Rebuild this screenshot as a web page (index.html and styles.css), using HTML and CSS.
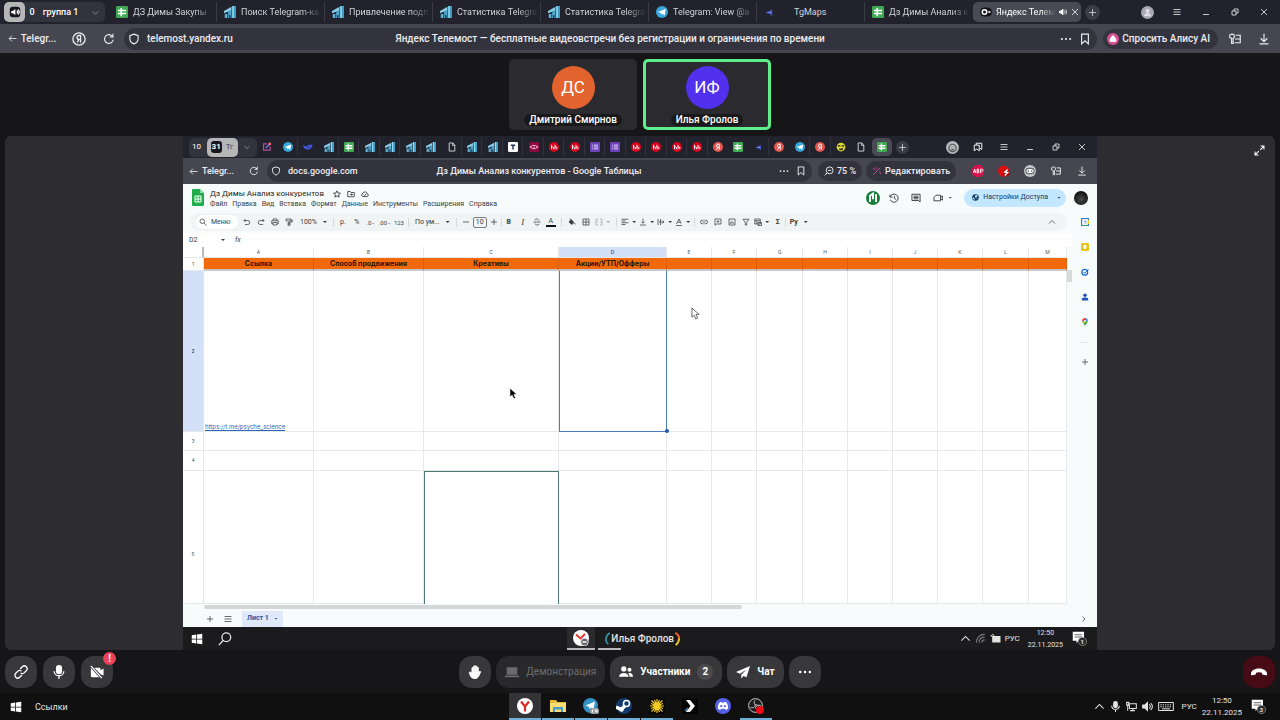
FILE: index.html
```html
<!DOCTYPE html>
<html lang="ru">
<head>
  <meta charset="UTF-8">
  <meta name="viewport" content="width=device-width, initial-scale=1.0">
  <title>Яндекс Телемост</title>
  <link rel="stylesheet" href="styles.css">
</head>
<body>

<!-- Icon set -->
<svg class="sprite" aria-hidden="true">
  <symbol id="back" viewBox="0 0 16 16"><path d="M15 8H2M7 3L2 8l5 5"/></symbol>
  <symbol id="reload" viewBox="0 0 16 16"><path d="M13.500 9A5.800 5.800 0 1 1 11 3.200L13 5M13.200 1v4.300H9"/></symbol>
  <symbol id="shield" viewBox="0 0 16 16"><path d="M8 1.500l5.500 2v4c0 3.500-2.500 5.800-5.500 7-3-1.200-5.500-3.500-5.500-7v-4z"/></symbol>
  <symbol id="ya-round" viewBox="0 0 16 16"><circle cx="8" cy="8" r="7"/><path d="M9.800 12V4H8a2.200 2.200 0 0 0 0 4.500h1.800M8 8.500L6 12"/></symbol>
  <symbol id="dots" viewBox="0 0 16 16"><g fill="currentColor" stroke="none"><circle cx="2.500" cy="8" r="1.400"/><circle cx="8" cy="8" r="1.400"/><circle cx="13.500" cy="8" r="1.400"/></g></symbol>
  <symbol id="bookmark" viewBox="0 0 16 16"><path d="M3.500 1.500h9v13L8 10.500l-4.500 4z"/></symbol>
  <symbol id="download" viewBox="0 0 16 16"><path d="M8 1v10M3.500 7L8 11.500 12.500 7M2 14.500h12"/></symbol>
  <symbol id="ext" viewBox="0 0 16 16"><path d="M1 3c0-2 6-2 6 0v3L5.500 7v7h-2V7L1 6zM9 3h6v10H7.500M8 8h7"/></symbol>
  <symbol id="down" viewBox="0 0 16 16"><path d="M3 6l5 5 5-5"/></symbol>
  <symbol id="up" viewBox="0 0 16 16"><path d="M2 11l6-6 6 6"/></symbol>
  <symbol id="right" viewBox="0 0 16 16"><path d="M5 3l5 5-5 5"/></symbol>
  <symbol id="plus" viewBox="0 0 16 16"><path d="M8 2v12M2 8h12"/></symbol>
  <symbol id="minus" viewBox="0 0 16 16"><path d="M2 8h12"/></symbol>
  <symbol id="lines" viewBox="0 0 16 16"><path d="M1 3h14M1 8h14M1 13h14"/></symbol>
  <symbol id="min" viewBox="0 0 16 16"><path d="M2 13h12"/></symbol>
  <symbol id="restore" viewBox="0 0 16 16"><path d="M2 6h8v8H2zM6 6V2h8v8h-4"/></symbol>
  <symbol id="close" viewBox="0 0 16 16"><path d="M2 2l12 12M14 2L2 14"/></symbol>
  <symbol id="sound" viewBox="0 0 16 16"><path fill="currentColor" d="M1 6h3l4-4v12l-4-4H1z"/><path d="M10.500 5c2 1.500 2 4.500 0 6M12.500 3c3.500 3 3.500 7 0 10"/></symbol>
  <symbol id="sound-box" viewBox="0 0 16 16"><rect x="1" y="1" width="14" height="14" rx="4" fill="#17171d" stroke="none"/><path fill="#fff" stroke="none" d="M3 6.500h2L8.500 4v8L5 9.500H3z"/><path stroke="#fff" d="M10.500 6c1 1 1 3 0 4M12 4.500c2 2 2 5 0 7"/></symbol>
  <symbol id="sheet" viewBox="0 0 16 16"><rect width="16" height="16" rx="1.500" fill="#3fa850" stroke="none"/><path stroke="#fff" stroke-width="2.200" d="M2.500 6h11M7 2.500v11M2.500 10h11"/></symbol>
  <symbol id="stat" viewBox="0 0 16 16"><g stroke="none"><path fill="#8ccbe6" d="M0 6.500L10 1v5L0 9.500z"/><path fill="#5fb0d6" d="M1 10.500h3.500V16H1z"/><path fill="#4ba7d0" d="M5.500 7.500L10 6v10H8.500v-4H7v4H5.500z"/><path fill="#3f9cc8" d="M11 0h5v16h-5z"/><path fill="#8fdcf0" d="M11 0h2v16h-2z"/></g></symbol>
  <symbol id="tg" viewBox="0 0 16 16"><circle cx="8" cy="8" r="8" fill="#35a6d8" stroke="none"/><path fill="#fff" stroke="none" d="M2.500 8L13 3.800 11.500 12.500 8.200 10.200 6.600 11.800 6.300 9.300z"/></symbol>
  <symbol id="maps" viewBox="0 0 16 16"><path fill="#4256c0" stroke="none" d="M2 9l9-4.500v9L7.500 10.500z"/><path fill="#8a9bf0" stroke="none" d="M2 9l7-1.500 1 1.500z"/></symbol>
  <symbol id="telemost" viewBox="0 0 16 16"><rect y="2" width="16" height="12" rx="6" fill="#15151b" stroke="none"/><circle cx="6" cy="8" r="3" stroke="#fff" stroke-width="2"/><path stroke="#fff" stroke-width="2" d="M11 8h3"/></symbol>
  <symbol id="user" viewBox="0 0 16 16"><g stroke="none"><circle cx="8" cy="8" r="8" fill="#a9a7b1"/><circle cx="8" cy="6" r="2.500" fill="#dddbe3"/><path fill="#dddbe3" d="M3.500 12.500c1-5 8-5 9 0z"/></g></symbol>
  <symbol id="alice" viewBox="0 0 16 16"><circle cx="8" cy="8" r="8" fill="#d94f96" stroke="none"/><path fill="#fff" stroke="none" d="M8 3c1.500 0 5 6 4.500 7.500S9.500 12 8 12s-4 0-4.500-1.500S6.500 3 8 3z"/></symbol>
  <symbol id="note" viewBox="0 0 16 16"><path stroke="#a9529c" stroke-width="2" d="M13 7v6H2.500V3H8"/><path stroke="#7e7ee8" stroke-width="2" d="M6 9.500l7-7"/><circle cx="12.500" cy="3" r="2.200" fill="#ff6b6b" stroke="none"/></symbol>
  <symbol id="whale" viewBox="0 0 16 16"><path fill="#4258e0" stroke="none" d="M0 5c3 0 4 2 6 2s2-3 3-3 2 2 6-1c0 5-3 9-7 9S1 10 0 5z"/><circle cx="9" cy="8" r="1" fill="#15151f" stroke="none"/></symbol>
  <symbol id="doc" viewBox="0 0 16 16"><path d="M3.500 1.500H9.500l3 3.500v9.500h-9zM9 2v3.500h3.500"/></symbol>
  <symbol id="t-bank" viewBox="0 0 16 16"><rect width="16" height="16" rx="2" fill="#fff" stroke="none"/><path stroke="#28305c" stroke-width="2.400" d="M4.500 5h7M8 5v7"/></symbol>
  <symbol id="eye" viewBox="0 0 16 16"><rect width="16" height="16" rx="2" fill="#8c0b45" stroke="none"/><path stroke="#ffbccb" d="M1.500 8L6 5.500h4L14.500 8 10 10.500H6z"/><circle cx="8" cy="8" r="1" fill="#fff" stroke="none"/></symbol>
  <symbol id="hh" viewBox="0 0 16 16"><circle cx="8" cy="8" r="8" fill="#d6001c" stroke="none"/><path stroke="#fff" stroke-width="1.500" d="M4 4.500v7M4 8.500c1.500-1.500 3-1 3 .5v2.500M9.500 4.500v7M9.500 8.500c1.500-1.500 3-1 3 .5v2.500"/></symbol>
  <symbol id="form" viewBox="0 0 16 16"><rect width="16" height="16" rx="2" fill="#6b42b8" stroke="none"/><path stroke="#e6dcff" d="M6 5h7M6 8h7M6 11h7M3 5h1.500M3 8h1.500M3 11h1.500"/></symbol>
  <symbol id="ya-red" viewBox="0 0 16 16"><circle cx="8" cy="8" r="8" fill="#e5544d" stroke="none"/><path stroke="#fff" d="M10 12.500v-9H8a2.400 2.400 0 0 0 0 5h2M8 8.500l-2.500 4"/></symbol>
  <symbol id="smile" viewBox="0 0 16 16"><circle cx="8" cy="8" r="7" fill="#e0d62f" stroke="none"/><path stroke="#222" stroke-width="2" d="M3 6h4M9 6h4M5 11c2 1.500 4 1.500 6-1"/></symbol>
  <symbol id="bear" viewBox="0 0 16 16"><circle cx="8" cy="8" r="8" fill="#b8b8bd" stroke="none"/><circle cx="8" cy="8.500" r="4.500" stroke="#55555c"/><path stroke="#44444c" d="M6 7.500h.5M9.500 7.500h.5M6.500 10.500h3"/></symbol>
  <symbol id="marks" viewBox="0 0 16 16"><path d="M2 5h8v9l-4-3-4 3zM5 5V2h9v10l-3-2"/></symbol>
  <symbol id="abp" viewBox="0 0 16 16"><path fill="#d8104c" stroke="none" d="M4.500 0h7L16 4.500v7L11.500 16h-7L0 11.500v-7z"/><path stroke="#fff" stroke-width="1.200" d="M2 10.500L3.500 5.500 5 10.500M2.500 9h2M6.800 5.500v5h1.500a1.300 1.300 0 0 0 0-2.500H7h1a1.200 1.200 0 0 0 0-2.500zM11.500 11V5.500H13a1.500 1.500 0 0 1 0 3h-1.500"/></symbol>
  <symbol id="redball" viewBox="0 0 16 16"><circle cx="7.500" cy="8" r="7.500" fill="#dc1010" stroke="none"/><circle cx="11" cy="10.500" r="4.500" fill="#a40505" stroke="none"/><path stroke="#fff" stroke-width="1.800" d="M13 6l-4 3.500 4 .5-4 4"/></symbol>
  <symbol id="mask" viewBox="0 0 16 16"><circle cx="8" cy="8" r="8" fill="#c8c8cc" stroke="none"/><rect x="2.500" y="4.500" width="11" height="7" rx="3.500" fill="#fff" stroke="#66666c"/><path stroke="#44444a" stroke-width="2" d="M5 8h1.500M9.500 8H11"/></symbol>
  <symbol id="zoom-icon" viewBox="0 0 16 16"><circle cx="9" cy="7" r="5.500"/><path d="M5 11l-4 4M6.500 7h5"/></symbol>
  <symbol id="wand" viewBox="0 0 16 16"><path stroke="#c24d9c" d="M2 14L13 3M2 3l3 4M7 2v3M12 9l2 4"/></symbol>
  <symbol id="star" viewBox="0 0 16 16"><path d="M8 1.500l2 4.500 4.800.4-3.700 3.200 1.200 4.700L8 11.800l-4.300 2.500 1.200-4.700L1.200 6.400 6 6z"/></symbol>
  <symbol id="folder" viewBox="0 0 16 16"><path d="M1.500 3h5L8 5h6.500v8.500h-13zM6 9h5M9 7l2 2-2 2"/></symbol>
  <symbol id="cloud" viewBox="0 0 16 16"><path d="M4 13a3.300 3.300 0 0 1 0-6.500 4.300 4.300 0 0 1 8.300 1A2.800 2.800 0 0 1 12.500 13zM5.500 9l2 2 3-3.500"/></symbol>
  <symbol id="history" viewBox="0 0 16 16"><path d="M1.500 2.500v4h4M2 6a6.500 6.500 0 1 1 0 4.500M8.500 4.500V8.500l3 2"/></symbol>
  <symbol id="comment" viewBox="0 0 16 16"><path d="M1.500 2h13v12.500L12 12H1.500zM4 5h8M4 7.200h8M4 9.400h8"/></symbol>
  <symbol id="video" viewBox="0 0 16 16"><path d="M5 3.500h7v9H1.500V7zM12 7l3-2.500v7L12 9"/></symbol>
  <symbol id="globe" viewBox="0 0 16 16"><circle cx="8" cy="8" r="7.500" fill="#123a5e" stroke="none"/><path fill="#c2e7ff" stroke="none" d="M2 7l4 3v4C3 13 1.500 10 2 7zM8 2l4 1v3l-2 2H7V5zM11 9l2 1-2 3z"/></symbol>
  <symbol id="m-green" viewBox="0 0 16 16"><circle cx="8" cy="8" r="8" fill="#187c3b" stroke="none"/><path stroke="#fff" stroke-width="2.200" d="M4.500 12.500V5.500L8 3v6.500M11.500 3.500v9"/></symbol>
  <symbol id="search" viewBox="0 0 16 16"><circle cx="6.500" cy="6.500" r="4.500"/><path d="M10 10l5 5"/></symbol>
  <symbol id="find" viewBox="0 0 16 16"><circle cx="9.500" cy="6" r="5"/><path d="M6 9.500L1 15"/></symbol>
  <symbol id="undo" viewBox="0 0 16 16"><path d="M5 2L2 5l3 3M2 5h7.500a4 4 0 0 1 0 8H4"/></symbol>
  <symbol id="redo" viewBox="0 0 16 16"><path d="M11 2l3 3-3 3M14 5H6.500a4 4 0 0 0 0 8H12"/></symbol>
  <symbol id="print" viewBox="0 0 16 16"><path d="M4 5V2h8v3M4 11.500H1.500V5.500h13v6H12M4 9h8v5H4z"/></symbol>
  <symbol id="roller" viewBox="0 0 16 16"><path d="M2 2h10v4H2zM12 4h2.500v4H8v6M6 10h4v4.500H6z"/></symbol>
  <symbol id="strike" viewBox="0 0 16 16"><path d="M1 8h14M12 5c-1-4-8-4-8-.5M4 11c1 4 8 4 8 .5"/></symbol>
  <symbol id="fill" viewBox="0 0 16 16"><path fill="currentColor" d="M6 3l6 6-4.500 4L2 8z"/><path d="M3.500 1L7 4.500M14 10v3"/></symbol>
  <symbol id="grid" viewBox="0 0 16 16"><path d="M2 2h12v12H2zM8 2v12M2 8h12"/></symbol>
  <symbol id="merge" viewBox="0 0 16 16"><path d="M6 2H2v12h4M10 2h4v12h-4M2 8h4M10 8h4"/></symbol>
  <symbol id="align" viewBox="0 0 16 16"><path d="M1 2.500h14M1 6h8M1 9.500h14M1 13h8"/></symbol>
  <symbol id="valign" viewBox="0 0 16 16"><path d="M2 14h12M8 1v9M5 7.500l3 3 3-3"/></symbol>
  <symbol id="wrap" viewBox="0 0 16 16"><path d="M2 2v12M7 2v12M4 8h10M11 5l3 3-3 3"/></symbol>
  <symbol id="rotate" viewBox="0 0 16 16"><path d="M3 12L8 2l4 9M5 8.500h6M2 15h12"/></symbol>
  <symbol id="link" viewBox="0 0 16 16"><path d="M7 11.500H4.500a3.500 3.500 0 0 1 0-7H7M9 4.500h2.500a3.500 3.500 0 0 1 0 7H9M5 8h6"/></symbol>
  <symbol id="add-comment" viewBox="0 0 16 16"><path d="M2 2h12v10H5l-3 2.500zM8 4.500v5M5.500 7h5"/></symbol>
  <symbol id="chart" viewBox="0 0 16 16"><path d="M2 2h12v12H2zM5 11.500V8M8 11.500v-6M11 11.500V9"/></symbol>
  <symbol id="filter" viewBox="0 0 16 16"><path d="M2 2.500h12L9.500 8.500V14h-3V8.500z"/></symbol>
  <symbol id="table-view" viewBox="0 0 16 16"><path d="M1.500 2h11v10h-11zM1.500 5.500h11M5.500 5.500V12M8 9h7v6H8z"/></symbol>
  <symbol id="cal" viewBox="0 0 16 16"><rect x="1" y="1" width="14" height="14" fill="#fff" stroke="#2f7de1" stroke-width="2.500"/><path stroke="#f4c20d" stroke-width="2.500" d="M15 4v8"/><path stroke="#3ba55a" stroke-width="2.500" d="M3 15h9"/><path stroke="#5a97e8" d="M5 6h5v4H6"/></symbol>
  <symbol id="keep" viewBox="0 0 16 16"><rect width="16" height="16" rx="2" fill="#e6c41a" stroke="none"/><path fill="#fff" stroke="none" d="M8 3.500a3.500 3.500 0 0 1 2 6.300V12H6V9.800A3.500 3.500 0 0 1 8 3.500z"/></symbol>
  <symbol id="tasks" viewBox="0 0 16 16"><circle cx="7.500" cy="8.500" r="5.800" stroke="#1a67d2" stroke-width="2.500"/><path stroke="#1a67d2" stroke-width="2" d="M5 8l2.500 2.500L15 2.500"/></symbol>
  <symbol id="contacts" viewBox="0 0 16 16"><g fill="#1a57b2" stroke="none"><circle cx="8" cy="4.500" r="3.500"/><path d="M1.500 15V12c0-4 13-4 13 0v3z"/></g></symbol>
  <symbol id="pin" viewBox="0 0 16 16"><g stroke="none"><path fill="#34a853" d="M8 16C7 12 2.500 10 2.500 6L8 6h5.500C13.500 10 9 12 8 16z"/><path fill="#4285f4" d="M8 0a5.500 5.500 0 0 1 5.500 6H8z"/><path fill="#ea4335" d="M2.500 6A5.500 5.500 0 0 1 8 0v6z"/><path fill="#fbbc04" d="M3 8l5-2 1 2-4 4z"/><circle cx="8" cy="5.800" r="2" fill="#fff"/></g></symbol>
  <symbol id="win" viewBox="0 0 16 16"><path fill="#fff" stroke="none" d="M1 3l6-1v5.500H1zM8 1.900L15 1v6.500H8zM1 8.500h6V14l-6-1zM8 8.500h7V15l-7-1z"/></symbol>
  <symbol id="ya-clock" viewBox="0 0 16 16"><circle cx="8" cy="8" r="8" fill="#fff" stroke="none"/><path stroke="#e5392f" stroke-width="2" d="M3 4.500l4.500 4L12 4"/><circle cx="11.500" cy="12" r="3.800" fill="#66666c" stroke="#eee" stroke-width=".8"/><path stroke="#fff" d="M9.500 12h4"/></symbol>
  <symbol id="ya-y" viewBox="0 0 16 16"><circle cx="8" cy="8" r="8" fill="#fff" stroke="none"/><path stroke="#e02b22" stroke-width="2.200" d="M4 3.500l4 5 4-5M8 8v5.500"/></symbol>
  <symbol id="arc-l" viewBox="0 0 8 16"><path stroke="#35a9b8" stroke-width="1.600" d="M6.500 1C1 5 1 11 5 14"/></symbol>
  <symbol id="arc-r" viewBox="0 0 8 16"><path stroke="#f0652c" stroke-width="2.200" d="M1.500 1C5 3 6 6 5.800 8"/><path stroke="#f3c62b" stroke-width="2.200" d="M5.800 7.500C5.600 11 4 13.500 2 15"/></symbol>
  <symbol id="wifi" viewBox="0 0 16 16"><path d="M2 14C2 7 7 2 14 2M6 14c0-5 3-8 8-8M10 14c0-3 1-4 4-4"/></symbol>
  <symbol id="battery" viewBox="0 0 16 16"><path fill="currentColor" d="M4 5h10.500v8H4z"/><path d="M1 3l3 3M3.500 1.500L6 4"/></symbol>
  <symbol id="notif" viewBox="0 0 20 20"><path fill="#fff" stroke="none" d="M1 1h15v12H9l-3 3v-3H1z"/><path stroke="#333" d="M3.500 5h10M3.500 8h10"/><circle cx="14" cy="14" r="5.500" fill="#2a2a2c" stroke="#8d8d90"/></symbol>
  <symbol id="chain" viewBox="0 0 16 16"><path d="M7 4.500l2.500-2.500a3 3 0 0 1 4.500 4.500L11.500 9a3 3 0 0 1-4 0M9 11.500L6.500 14A3 3 0 0 1 2 9.500L4.500 7a3 3 0 0 1 4 0"/></symbol>
  <symbol id="mic" viewBox="0 0 16 16"><rect x="4.500" y="0" width="7" height="10.500" rx="3.500" fill="currentColor" stroke="none"/><path d="M2.500 7c0 7 11 7 11 0M8 12.500V16"/></symbol>
  <symbol id="cam-off" viewBox="0 0 16 16"><path fill="currentColor" stroke="none" d="M1 3.500L10.500 14H2.500A1.500 1.500 0 0 1 1 12.500zM5 3h5.500A1.500 1.500 0 0 1 12 4.500V6l3.500-2v8L12 10.500z"/><path d="M1 1l12.500 14"/></symbol>
  <symbol id="hand" viewBox="0 0 16 16"><path fill="currentColor" stroke="currentColor" stroke-width="1" stroke-linejoin="round" d="M4.500 9V3.500c0-1 1.300-1 1.300 0V7h.6V1.500c0-1 1.400-1 1.400 0V7h.6V1.500c0-1 1.400-1 1.400 0V7.500h.6V3c0-1 1.400-1 1.400 0v6l1.200-1.500c.7-.8 1.800-.2 1.300.8C13 11 12 15.500 8 15.500c-4 0-5.500-3-6.500-6.500-.3-1 .8-1.500 1.400-.7z"/></symbol>
  <symbol id="laptop" viewBox="0 0 16 16"><path fill="currentColor" stroke="none" d="M2 2.500h12v8.500H2zM0 12h16v2H0z"/></symbol>
  <symbol id="people" viewBox="0 0 16 16"><g fill="currentColor" stroke="none"><circle cx="5.500" cy="4.500" r="3"/><path d="M0 13.500c0-6 11-6 11 0z"/><circle cx="12" cy="5.500" r="2.300"/><path d="M12 13.500c0-2-.5-3-1.500-4 3-1 5.500.5 5.500 4z"/></g></symbol>
  <symbol id="plane" viewBox="0 0 16 16"><path fill="currentColor" stroke="none" d="M16 1L0 8l4.500 2L12 5 6 11v4.500l2.500-3L12 14z"/></symbol>
  <symbol id="phone" viewBox="0 0 16 16"><path fill="currentColor" stroke="none" d="M0 9C1.500 3 14.500 3 16 9c.4 1.500-.2 2.500-1.200 2.300L12 10.800c-.8-.2-1-.8-1-2-1.500-.8-4.500-.8-6 0 0 1.200-.2 1.800-1 2l-2.800.5C.2 11.500-.4 10.500 0 9z"/></symbol>
  <symbol id="expand" viewBox="0 0 16 16"><path d="M9 7l5.500-5.500M9.500 1.500h5v5M7 9l-5.500 5.500M6.500 14.500h-5v-5"/></symbol>
  <symbol id="explorer" viewBox="0 0 16 16"><g stroke="none"><path fill="#e6b93a" d="M0 2h6l1.500 2H16v10H0z"/><path fill="#f7dd72" d="M0 5h16v9H0z"/><path fill="#4b9bc9" d="M3 9h10v5h-2v-2.500H5V14H3z"/></g></symbol>
  <symbol id="tg-count" viewBox="0 0 16 16"><circle cx="7.500" cy="7.500" r="7.500" fill="#3193c5" stroke="none"/><path fill="#fff" stroke="none" d="M2.500 7.500L12 3.500 10.500 11.500 7.500 9.500 6 11 5.800 8.700z"/><rect x="7" y="10" width="9" height="6" rx="2" fill="#9a9fa3" stroke="none"/><path stroke="#fff" stroke-width=".9" d="M9.500 11.500v3M12.500 11.500v1.800h1.500M14 11.500v3"/></symbol>
  <symbol id="steam" viewBox="0 0 16 16"><circle cx="8" cy="8" r="8" fill="#123a6c" stroke="none"/><path stroke="#fff" stroke-width="3.500" d="M0 9l5.500 2.500L10 6.500"/><circle cx="10.500" cy="5.500" r="3" fill="#123a6c" stroke="#fff"/><circle cx="5.500" cy="11.500" r="2.300" fill="#fff" stroke="none"/></symbol>
  <symbol id="sun" viewBox="0 0 16 16"><rect width="16" height="16" fill="#080808" stroke="none"/><circle cx="8" cy="8" r="3.500" fill="#f0ca22" stroke="none"/><path stroke="#f0ca22" stroke-width="1.200" d="M8 1v14M1 8h14M2.500 2.500l11 11M13.500 2.500l-11 11M5.500 2l5 12M10.500 2l-5 12M2 5.500l12 5M14 5.500l-12 5"/></symbol>
  <symbol id="chevron-app" viewBox="0 0 16 16"><rect width="16" height="16" fill="#050505" stroke="none"/><path fill="#fff" stroke="none" d="M4 2h4l5 6-5 6H4l4.500-6z"/><path stroke="#4b83c7" d="M3 13l3-3"/></symbol>
  <symbol id="discord" viewBox="0 0 16 16"><circle cx="8" cy="8" r="8" fill="#5561e8" stroke="none"/><path fill="#fff" stroke="none" d="M4.500 4.500l2-.8.5 1h2l.5-1 2 .8c1.300 2 1.800 4 1.500 6.300L10.800 12l-.8-1.200H6L5.200 12 3 10.800c-.3-2.300.2-4.300 1.500-6.300z"/><circle cx="6.200" cy="8.200" r="1.100" fill="#5561e8" stroke="none"/><circle cx="9.800" cy="8.200" r="1.100" fill="#5561e8" stroke="none"/></symbol>
  <symbol id="obs" viewBox="0 0 16 16"><circle cx="7.500" cy="7.500" r="6.900" fill="#1c1c1e" stroke="#ccc" stroke-width="1"/><path stroke="#ccc" stroke-width="1" d="M7 2.500c-2 2.500 0 4.500 2.500 4.500M13 8c-3-2-5.500 0-5.500 2.500M2.500 9.500c3.500 1 5-1 4.500-3.500"/><circle cx="12" cy="12" r="4" fill="#f00c16" stroke="none"/></symbol>
  <symbol id="net" viewBox="0 0 16 16"><path d="M5 4h10v7H5zM10 11v3M6 14h7M1 2h3v4H1zM2.500 6v8"/></symbol>
  <symbol id="keyboard" viewBox="0 0 24 16"><path d="M1 2h22v12H1zM6 11.500h12"/><path stroke-dasharray="2 1.500" d="M3.500 5.500h17M3.500 8.500h17"/></symbol>
</svg>

<!-- Browser tabs -->
<header class="browser">
  <div class="tabs">
    <div class="tab-group">
      <button class="group-sound" aria-label="Звук"><svg class="icon"><use href="#sound-box"/></svg></button>
      <button class="group-name"><span>0</span><span>группа 1</span><svg class="icon muted"><use href="#down"/></svg></button>
    </div>
    <a class="tab" href="#"><svg class="icon"><use href="#sheet"/></svg><span>ДЗ Димы Закупы</span></a>
    <a class="tab" href="#"><svg class="icon"><use href="#stat"/></svg><span>Поиск Telegram-ка</span></a>
    <a class="tab" href="#"><svg class="icon"><use href="#stat"/></svg><span>Привлечение подп</span></a>
    <a class="tab" href="#"><svg class="icon"><use href="#stat"/></svg><span>Статистика Telegra</span></a>
    <a class="tab" href="#"><svg class="icon"><use href="#stat"/></svg><span>Статистика Telegra</span></a>
    <a class="tab" href="#"><svg class="icon"><use href="#tg"/></svg><span>Telegram: View @a</span></a>
    <a class="tab tab-centered" href="#"><svg class="icon"><use href="#maps"/></svg><span>TgMaps</span></a>
    <a class="tab" href="#"><svg class="icon"><use href="#sheet"/></svg><span>Дз Димы Анализ к</span></a>
    <a class="tab tab-active" href="#"><svg class="icon"><use href="#telemost"/></svg><span>Яндекс Телем</span><svg class="icon small"><use href="#sound"/></svg><svg class="icon small"><use href="#close"/></svg></a>
    <button class="new-tab" aria-label="Новая вкладка"><svg class="icon"><use href="#plus"/></svg></button>
    <div class="window-buttons">
      <button aria-label="Профиль"><svg class="icon avatar-icon"><use href="#user"/></svg></button>
      <button aria-label="Меню"><svg class="icon small"><use href="#lines"/></svg></button>
      <button aria-label="Свернуть"><svg class="icon small"><use href="#min"/></svg></button>
      <button aria-label="Окно"><svg class="icon small"><use href="#restore"/></svg></button>
      <button aria-label="Закрыть"><svg class="icon small"><use href="#close"/></svg></button>
    </div>
  </div>

  <div class="address">
    <button class="back"><svg class="icon"><use href="#back"/></svg>Telegr...</button>
    <button class="nav-btn" aria-label="Яндекс"><svg class="icon big"><use href="#ya-round"/></svg></button>
    <button class="nav-btn" aria-label="Обновить"><svg class="icon"><use href="#reload"/></svg></button>
    <div class="field">
      <svg class="icon"><use href="#shield"/></svg>
      <input class="url" type="text" aria-label="Адрес" value="telemost.yandex.ru">
      <span class="page-title">Яндекс Телемост — бесплатные видеовстречи без регистрации и ограничения по времени</span>
      <span class="field-end"><svg class="icon"><use href="#dots"/></svg><svg class="icon"><use href="#bookmark"/></svg></span>
    </div>
    <button class="pill"><svg class="icon"><use href="#alice"/></svg>Спросить Алису AI</button>
    <div class="address-end">
      <button aria-label="Расширения"><svg class="icon"><use href="#ext"/></svg></button>
      <button aria-label="Загрузки"><svg class="icon"><use href="#download"/></svg></button>
    </div>
  </div>
</header>

<main class="call">
  <div class="people">
    <div class="person">
      <span class="avatar orange">ДС</span>
      <span class="name">Дмитрий Смирнов</span>
    </div>
    <div class="person speaking">
      <span class="avatar violet">ИФ</span>
      <span class="name">Илья Фролов</span>
    </div>
  </div>

  <section class="stage">
    <button class="expand" aria-label="Развернуть"><svg class="icon"><use href="#expand"/></svg></button>

    <!-- Shared screen -->
    <div class="screen">
      <div class="tabs inner-tabs">
        <div class="inner-group">
          <span>10</span>
          <button><b>31</b>Тг</button>
          <svg class="icon small muted"><use href="#down"/></svg>
        </div>
        <div class="mini-tabs">
          <span><svg class="icon"><use href="#note"/></svg></span>
          <span><svg class="icon"><use href="#tg"/></svg></span>
          <span class="div"><svg class="icon"><use href="#whale"/></svg></span>
          <span><svg class="icon"><use href="#stat"/></svg></span>
          <span class="div"><svg class="icon"><use href="#sheet"/></svg></span>
          <span class="div"><svg class="icon"><use href="#stat"/></svg></span>
          <span class="div"><svg class="icon"><use href="#stat"/></svg></span>
          <span class="div"><svg class="icon"><use href="#stat"/></svg></span>
          <span class="div"><svg class="icon"><use href="#stat"/></svg></span>
          <span><svg class="icon"><use href="#doc"/></svg></span>
          <span class="div"><svg class="icon"><use href="#stat"/></svg></span>
          <span class="div"><svg class="icon"><use href="#stat"/></svg></span>
          <span class="div"><svg class="icon"><use href="#t-bank"/></svg></span>
          <span class="div"><svg class="icon"><use href="#eye"/></svg></span>
          <span class="div"><svg class="icon"><use href="#hh"/></svg></span>
          <span class="div"><svg class="icon"><use href="#hh"/></svg></span>
          <span class="div"><svg class="icon"><use href="#form"/></svg></span>
          <span class="div"><svg class="icon"><use href="#form"/></svg></span>
          <span class="div"><svg class="icon"><use href="#hh"/></svg></span>
          <span class="div"><svg class="icon"><use href="#hh"/></svg></span>
          <span class="div"><svg class="icon"><use href="#hh"/></svg></span>
          <span class="div"><svg class="icon"><use href="#hh"/></svg></span>
          <span class="div"><svg class="icon"><use href="#ya-red"/></svg></span>
          <span><svg class="icon"><use href="#sheet"/></svg></span>
          <span><svg class="icon"><use href="#maps"/></svg></span>
          <span class="div"><svg class="icon"><use href="#ya-red"/></svg></span>
          <span><svg class="icon"><use href="#tg"/></svg></span>
          <span class="div"><svg class="icon"><use href="#ya-red"/></svg></span>
          <span class="div"><svg class="icon"><use href="#smile"/></svg></span>
          <span><svg class="icon"><use href="#doc"/></svg></span>
          <span class="current"><svg class="icon"><use href="#sheet"/></svg></span>
        </div>
        <button class="new-tab" aria-label="Новая вкладка"><svg class="icon"><use href="#plus"/></svg></button>
        <div class="window-buttons">
          <button aria-label="Профиль"><svg class="icon avatar-icon"><use href="#bear"/></svg></button>
          <button aria-label="Закладки"><svg class="icon mid"><use href="#marks"/></svg></button>
          <button aria-label="Меню"><svg class="icon small"><use href="#lines"/></svg></button>
          <button aria-label="Свернуть"><svg class="icon small"><use href="#min"/></svg></button>
          <button aria-label="Окно"><svg class="icon small"><use href="#restore"/></svg></button>
          <button aria-label="Закрыть"><svg class="icon small"><use href="#close"/></svg></button>
        </div>
      </div>

      <div class="address inner-address">
        <button class="back"><svg class="icon"><use href="#back"/></svg>Telegr...</button>
        <button class="nav-btn" aria-label="Обновить"><svg class="icon mid"><use href="#reload"/></svg></button>
        <div class="field">
          <svg class="icon mid"><use href="#shield"/></svg>
          <input class="url" type="text" aria-label="Адрес" value="docs.google.com">
          <span class="page-title">Дз Димы Анализ конкурентов - Google Таблицы</span>
          <span class="field-end"><svg class="icon mid"><use href="#dots"/></svg><svg class="icon mid"><use href="#bookmark"/></svg></span>
        </div>
        <button class="pill"><svg class="icon mid"><use href="#zoom-icon"/></svg>75 %</button>
        <button class="pill"><svg class="icon mid"><use href="#wand"/></svg>Редактировать</button>
        <div class="address-end">
          <button aria-label="ABP"><svg class="icon"><use href="#abp"/></svg></button>
          <button aria-label="Блокировщик"><svg class="icon"><use href="#redball"/></svg></button>
          <button aria-label="Маска"><svg class="icon"><use href="#mask"/></svg></button>
          <button aria-label="Расширения"><svg class="icon mid"><use href="#ext"/></svg></button>
          <button aria-label="Загрузки"><svg class="icon mid"><use href="#download"/></svg></button>
        </div>
      </div>

      <!-- Google Sheets -->
      <div class="sheets">
        <div class="sheets-head">
          <svg class="logo" viewBox="0 0 12 17"><path fill="#1fae4b" d="M1 0h7l4 4v12a1 1 0 0 1-1 1H1a1 1 0 0 1-1-1V1a1 1 0 0 1 1-1z"/><path fill="#8fdba5" d="M8 0l4 4H8z"/><path fill="none" stroke="#fff" d="M3 7h6v6H3zM3 10h6M6 7v6"/></svg>
          <div class="doc">
            <div class="doc-title">Дз Димы Анализ конкурентов
              <svg class="icon"><use href="#star"/></svg><svg class="icon"><use href="#folder"/></svg><svg class="icon"><use href="#cloud"/></svg>
            </div>
            <nav class="menu">
              <a href="#">Файл</a><a href="#">Правка</a><a href="#">Вид</a><a href="#">Вставка</a><a href="#">Формат</a><a href="#">Данные</a><a href="#">Инструменты</a><a href="#">Расширения</a><a href="#">Справка</a>
            </nav>
          </div>
          <div class="head-end">
            <svg class="icon user-m"><use href="#m-green"/></svg>
            <button aria-label="История"><svg class="icon"><use href="#history"/></svg></button>
            <button aria-label="Комментарии"><svg class="icon"><use href="#comment"/></svg></button>
            <button class="meet" aria-label="Встреча"><svg class="icon"><use href="#video"/></svg><i class="caret"></i></button>
            <button class="share"><svg class="icon"><use href="#globe"/></svg>Настройки Доступа<i class="caret"></i></button>
            <span class="photo"></span>
          </div>
        </div>

        <div class="sheets-body">
          <div class="sheets-main">
            <div class="toolbar">
              <label class="tool-search"><svg class="icon"><use href="#search"/></svg><input type="text" value="Меню"></label>
              <button class="tool" aria-label="Отменить"><svg class="icon"><use href="#undo"/></svg></button>
              <button class="tool" aria-label="Повторить"><svg class="icon"><use href="#redo"/></svg></button>
              <button class="tool" aria-label="Печать"><svg class="icon"><use href="#print"/></svg></button>
              <button class="tool" aria-label="Формат"><svg class="icon"><use href="#roller"/></svg></button>
              <button class="drop">100%<i class="caret"></i></button>
              <span class="sep"></span>
              <button class="tool">р.</button>
              <button class="tool">%</button>
              <button class="tool small-text">.0<sub>←</sub></button>
              <button class="tool small-text">.00<sub>→</sub></button>
              <button class="tool small-text">123</button>
              <span class="sep"></span>
              <button class="drop">По ум...<i class="caret"></i></button>
              <span class="sep"></span>
              <button class="tool" aria-label="Меньше"><svg class="icon"><use href="#minus"/></svg></button>
              <input class="font-size" type="text" aria-label="Размер шрифта" value="10">
              <button class="tool" aria-label="Больше"><svg class="icon"><use href="#plus"/></svg></button>
              <span class="sep sep-tight"></span>
              <button class="tool"><b>B</b></button>
              <button class="tool serif"><i>I</i></button>
              <button class="tool" aria-label="Зачеркнуть"><svg class="icon"><use href="#strike"/></svg></button>
              <button class="tool"><span class="color-a">A</span></button>
              <span class="sep sep-wide"></span>
              <button class="tool" aria-label="Заливка"><svg class="icon"><use href="#fill"/></svg></button>
              <button class="tool" aria-label="Границы"><svg class="icon"><use href="#grid"/></svg></button>
              <button class="tool-drop faded" aria-label="Объединить"><svg class="icon"><use href="#merge"/></svg><i class="caret"></i></button>
              <span class="sep sep-wide"></span>
              <button class="tool-drop" aria-label="Выровнять"><svg class="icon"><use href="#align"/></svg><i class="caret"></i></button>
              <button class="tool-drop" aria-label="По вертикали"><svg class="icon"><use href="#valign"/></svg><i class="caret"></i></button>
              <button class="tool-drop" aria-label="Перенос"><svg class="icon"><use href="#wrap"/></svg><i class="caret"></i></button>
              <button class="tool-drop" aria-label="Поворот"><svg class="icon"><use href="#rotate"/></svg><i class="caret"></i></button>
              <span class="sep"></span>
              <button class="tool" aria-label="Ссылка"><svg class="icon"><use href="#link"/></svg></button>
              <button class="tool" aria-label="Комментарий"><svg class="icon"><use href="#add-comment"/></svg></button>
              <button class="tool" aria-label="Диаграмма"><svg class="icon"><use href="#chart"/></svg></button>
              <button class="tool" aria-label="Фильтр"><svg class="icon"><use href="#filter"/></svg></button>
              <button class="tool-drop" aria-label="Таблица"><svg class="icon"><use href="#table-view"/></svg><i class="caret"></i></button>
              <button class="tool"><b>Σ</b></button>
              <span class="sep sep-tight"></span>
              <button class="drop"><b>Pу</b><i class="caret"></i></button>
              <button class="tool collapse" aria-label="Скрыть"><svg class="icon"><use href="#up"/></svg></button>
            </div>

            <div class="formula">
              <input class="cell-name" type="text" aria-label="Ячейка" value="D2"><i class="caret"></i>
              <label class="fx" for="fx">fx</label><input id="fx" class="fx-input" type="text">
            </div>

            <div class="grid-wrap">
              <table class="grid">
                <colgroup>
                  <col class="c-head"><col class="c-a"><col class="c-b"><col class="c-c"><col class="c-d">
                  <col class="c-n"><col class="c-n"><col class="c-m"><col class="c-n"><col class="c-n"><col class="c-n"><col class="c-n"><col class="c-m"><col>
                </colgroup>
                <thead>
                  <tr class="letters"><th></th><th>A</th><th>B</th><th>C</th><th class="picked">D</th><th>E</th><th>F</th><th>G</th><th>H</th><th>I</th><th>J</th><th>K</th><th>L</th><th>M</th></tr>
                </thead>
                <tbody>
                  <tr class="titles"><th>1</th><td>Ссылка</td><td>Способ продвижения</td><td>Креативы</td><td>Акции/УТП/Офферы</td><td></td><td></td><td></td><td></td><td></td><td></td><td></td><td></td><td></td></tr>
                  <tr class="row-2"><th class="picked">2</th><td><a href="#">https://t.me/psyche_science</a></td><td></td><td></td><td class="selected"></td><td></td><td></td><td></td><td></td><td></td><td></td><td></td><td></td><td></td></tr>
                  <tr class="row-3"><th>3</th><td></td><td></td><td></td><td></td><td></td><td></td><td></td><td></td><td></td><td></td><td></td><td></td><td></td></tr>
                  <tr class="row-4"><th>4</th><td></td><td></td><td></td><td></td><td></td><td></td><td></td><td></td><td></td><td></td><td></td><td></td><td></td></tr>
                  <tr class="row-5"><th>5</th><td></td><td></td><td class="other-user"></td><td></td><td></td><td></td><td></td><td></td><td></td><td></td><td></td><td></td><td></td></tr>
                </tbody>
              </table>
              <div class="v-scroll"><span></span></div>
            </div>
            <div class="h-scroll"><span></span></div>
          </div>

          <aside class="side">
            <svg class="icon"><use href="#cal"/></svg>
            <svg class="icon"><use href="#keep"/></svg>
            <svg class="icon"><use href="#tasks"/></svg>
            <svg class="icon"><use href="#contacts"/></svg>
            <svg class="icon"><use href="#pin"/></svg>
            <hr>
            <svg class="icon"><use href="#plus"/></svg>
          </aside>
        </div>

        <div class="sheet-tabs">
          <button aria-label="Добавить лист"><svg class="icon"><use href="#plus"/></svg></button>
          <button aria-label="Все листы"><svg class="icon"><use href="#lines"/></svg></button>
          <button class="sheet-tab">Лист 1<i class="caret"></i></button>
          <button class="side-toggle" aria-label="Панель"><svg class="icon"><use href="#right"/></svg></button>
        </div>

        <svg class="cursor cursor-dark" viewBox="0 0 10 14"><path fill="#000" stroke="#fff" stroke-width=".8" d="M1 1v10l2.500-2 1.800 4 2-1L5.500 8H9z"/></svg>
        <svg class="cursor cursor-light" viewBox="0 0 10 14"><path fill="#fff" stroke="#333" stroke-width=".8" d="M1 1v10l2.500-2 1.800 4 2-1L5.500 8H9z"/></svg>
      </div>

      <div class="taskbar inner-taskbar">
        <svg class="icon"><use href="#win"/></svg>
        <svg class="icon find"><use href="#find"/></svg>
        <div class="inner-apps">
          <button class="app open active" aria-label="Браузер"><svg class="icon"><use href="#ya-clock"/></svg></button>
          <span class="speaker"><svg class="arc"><use href="#arc-l"/></svg>Илья Фролов<svg class="arc"><use href="#arc-r"/></svg></span>
        </div>
        <div class="tray">
          <svg class="icon"><use href="#up"/></svg>
          <svg class="icon muted"><use href="#wifi"/></svg>
          <svg class="icon"><use href="#battery"/></svg>
          <span>РУС</span>
          <time>12:50<br>22.11.2025</time>
          <span class="notif"><svg><use href="#notif"/></svg><b>1</b></span>
        </div>
      </div>
    </div>
  </section>

  <div class="controls">
    <div class="group">
      <button class="control" aria-label="Ссылка"><svg class="icon"><use href="#chain"/></svg></button>
      <button class="control" aria-label="Микрофон"><svg class="icon"><use href="#mic"/></svg></button>
      <button class="control" aria-label="Камера"><svg class="icon"><use href="#cam-off"/></svg><span class="badge">!</span></button>
    </div>
    <div class="group">
      <button class="control" aria-label="Поднять руку"><svg class="icon"><use href="#hand"/></svg></button>
      <button class="control wide" disabled><svg class="icon"><use href="#laptop"/></svg>Демонстрация</button>
      <button class="control wide"><svg class="icon"><use href="#people"/></svg>Участники<span class="count">2</span></button>
      <button class="control wide"><svg class="icon"><use href="#plane"/></svg>Чат</button>
      <button class="control" aria-label="Ещё"><svg class="icon"><use href="#dots"/></svg></button>
    </div>
    <div class="group">
      <button class="control hangup" aria-label="Завершить"><svg class="icon"><use href="#phone"/></svg></button>
    </div>
  </div>
</main>

<footer class="taskbar">
  <div class="start"><svg class="icon"><use href="#win"/></svg><span>Ссылки</span></div>
  <div class="apps">
    <button class="app open active" aria-label="Яндекс"><svg class="icon"><use href="#ya-y"/></svg></button>
    <button class="app open" aria-label="Проводник"><svg class="icon"><use href="#explorer"/></svg></button>
    <button class="app open" aria-label="Telegram"><svg class="icon"><use href="#tg-count"/></svg></button>
    <button class="app open" aria-label="Steam"><svg class="icon"><use href="#steam"/></svg></button>
    <button class="app open" aria-label="Солнце"><svg class="icon"><use href="#sun"/></svg></button>
    <button class="app" aria-label="Терминал"><svg class="icon"><use href="#chevron-app"/></svg></button>
    <button class="app" aria-label="Discord"><svg class="icon"><use href="#discord"/></svg></button>
    <button class="app open" aria-label="OBS"><svg class="icon"><use href="#obs"/></svg></button>
  </div>
  <div class="tray">
    <svg class="icon"><use href="#up"/></svg>
    <svg class="icon"><use href="#mic"/></svg>
    <svg class="icon"><use href="#net"/></svg>
    <svg class="icon"><use href="#sound"/></svg>
    <svg class="icon keys"><use href="#keyboard"/></svg>
    <span>РУС</span>
    <time>12:50<br>22.11.2025</time>
    <span class="notif"><svg><use href="#notif"/></svg><b>3</b></span>
  </div>
</footer>

</body>
</html>
```

FILE: styles.css
```css
* {
  box-sizing: border-box;
}

body {
  margin: 0;
  min-height: 100vh;
  display: flex;
  flex-direction: column;
  background: #161618;
  color: #fff;
  font: 500 10px/12px Roboto, "Open Sans", sans-serif;
}

button, input {
  margin: 0;
  padding: 0;
  border: 0;
  background: none;
  color: inherit;
  font: inherit;
}

button {
  display: flex;
  align-items: center;
  justify-content: center;
  white-space: nowrap;
}

a {
  color: inherit;
  text-decoration: none;
}

.sprite {
  position: absolute;
  width: 0;
  height: 0;
}

.icon {
  width: 12px;
  height: 12px;
  flex: none;
  fill: none;
  stroke: currentColor;
  stroke-width: 1.5;
}

.small {
  width: 8px;
  height: 8px;
}

.mid {
  width: 10px;
  height: 10px;
}

.big {
  width: 14px;
  height: 14px;
}

.muted {
  opacity: 0.5;
}

.caret {
  width: 4px;
  height: 2px;
  flex: none;
  background: currentColor;
  clip-path: polygon(0 0, 100% 0, 50% 100%);
}

/* Browser */
.tabs {
  display: flex;
  align-items: center;
  height: 24px;
  background: #22222d;
  color: #d3d3da;
  font-size: 9px;
  font-weight: 400;
}

.tab-group {
  display: flex;
  flex: none;
  width: 101px;
  height: 20px;
  margin: 0 4px;
  border-radius: 5px;
  background: #33333e;
  color: #fff;
  font-weight: 500;
}

.group-sound {
  width: 21px;
  border-radius: 5px;
  background: #b6b6b9;
}

.group-name {
  flex: 1;
  gap: 8px;
}

.group-name .icon {
  width: 9px;
  height: 9px;
  margin-left: 5px;
}

.tab {
  display: flex;
  align-items: center;
  gap: 5px;
  flex: 0 1 108px;
  min-width: 0;
  height: 20px;
  padding: 0 3px 0 7px;
}

.tab + .tab {
  box-shadow: -1px 0 #3b3b47;
}

.tab span {
  flex: 1;
  white-space: nowrap;
  mask-image: linear-gradient(90deg, #000 75%, transparent);
}

.tab-centered span {
  flex: none;
  margin-left: 13px;
  mask-image: none;
}

.tab.tab-active {
  gap: 4px;
  padding-right: 6px;
  border-radius: 5px;
  background: #4a4a54;
  box-shadow: none;
  color: #fff;
}

.new-tab {
  width: 15px;
  height: 15px;
  margin-left: 4px;
  border-radius: 50%;
  background: #3c3c48;
}

.new-tab .icon {
  width: 9px;
  height: 9px;
}

.window-buttons {
  display: flex;
  margin-left: auto;
  padding-right: 2px;
  color: #fff;
}

.window-buttons button {
  width: 29px;
}

.window-buttons .avatar-icon {
  width: 13px;
  height: 13px;
}

.address {
  display: flex;
  align-items: center;
  height: 29px;
  background: #464651;
  color: #ededf0;
}

.back {
  gap: 4px;
  width: 64px;
}

.back .icon {
  width: 9px;
  height: 9px;
}

.nav-btn {
  width: 30px;
}

.field {
  display: flex;
  align-items: center;
  flex: 1;
  gap: 7px;
  height: 22px;
  margin-right: 6px;
  padding: 0 6px 0 4px;
  border-radius: 11px;
  background: #33333e;
}

.url {
  width: 100px;
  flex: none;
}

.page-title {
  flex: 1;
  text-align: center;
  white-space: nowrap;
}

.field-end {
  display: flex;
  justify-content: flex-end;
  gap: 7px;
  width: 118px;
}

.pill {
  gap: 3px;
  height: 20px;
  padding: 0 8px 0 4px;
  border-radius: 10px;
  background: #33333e;
}

.address-end {
  display: flex;
  margin-left: 2px;
  padding-right: 2px;
}

.address-end button {
  width: 29px;
}

/* Call */
.call {
  display: flex;
  flex-direction: column;
  flex: 1;
}

.people {
  display: flex;
  justify-content: center;
  gap: 6px;
  padding: 6px 0;
}

.person {
  display: flex;
  flex-direction: column;
  align-items: center;
  gap: 5px;
  width: 128px;
  height: 71px;
  padding-top: 7px;
  border-radius: 5px;
  background: #2b2a2f;
}

.speaking {
  box-shadow: inset 0 0 0 3px #5cef8c;
}

.avatar {
  width: 43px;
  height: 43px;
  border-radius: 50%;
  font-size: 17px;
  font-weight: 400;
  line-height: 43px;
  text-align: center;
}

.orange {
  background: #e2632e;
}

.violet {
  background: #5130ee;
}

.name {
  padding: 0 5px;
  border-radius: 6px;
  background: #19191b;
}

.stage {
  position: relative;
  display: flex;
  justify-content: center;
  flex: 1;
  margin: 0 5px;
  border-radius: 6px;
  overflow: hidden;
  background: #2d2c31;
}

.expand {
  position: absolute;
  top: 9px;
  right: 10px;
}

.expand .icon {
  width: 11px;
  height: 11px;
}

.screen {
  display: flex;
  flex-direction: column;
  width: 914px;
}

.inner-tabs {
  height: 22px;
}

.inner-group {
  display: flex;
  align-items: center;
  justify-content: space-between;
  width: 68px;
  height: 19px;
  margin-left: 6px;
  padding: 0 6px 0 3px;
  border-radius: 5px;
  background: #33333e;
  color: #fff;
  font-size: 8px;
}

.inner-group button {
  gap: 4px;
  width: 31px;
  height: 19px;
  border-radius: 5px;
  background: #b6b6b9;
  color: #44444c;
}

.inner-group b {
  padding: 0 1px;
  border-radius: 3px;
  background: #17171d;
  color: #fff;
}

.mini-tabs {
  display: flex;
  width: 635px;
}

.mini-tabs span {
  display: flex;
  align-items: center;
  justify-content: center;
  flex: 1;
  height: 18px;
}

.mini-tabs .icon {
  width: 10px;
  height: 10px;
}

.mini-tabs .div {
  box-shadow: -1px 0 #32323e;
}

.mini-tabs .current {
  border-radius: 5px;
  background: #4a4a54;
}

.inner-tabs .new-tab {
  width: 13px;
  height: 13px;
}

.inner-tabs .window-buttons button,
.inner-address .address-end button {
  width: 26px;
}

.inner-address {
  height: 26px;
  font-size: 9px;
}

.inner-address .back {
  width: 57px;
}

.inner-address .nav-btn {
  width: 27px;
}

.inner-address .field {
  flex: 0 1 545px;
}

.inner-address .field-end {
  width: 116px;
}

.inner-address .pill {
  padding: 0 6px;
}

.inner-address .pill + .pill {
  margin-left: 4px;
  font-size: 9px;
}

.inner-address .address-end {
  margin-left: auto;
}

/* Google Sheets */
.sheets {
  position: relative;
  display: flex;
  flex-direction: column;
  flex: 1;
  background: #f8fbfb;
  color: #3a3d40;
  font: 400 7px/9px Roboto, "Open Sans", sans-serif;
}

.sheets .icon {
  width: 8px;
  height: 8px;
}

.sheets-head {
  display: flex;
  align-items: center;
  height: 27px;
  padding: 0 9px;
}

.logo {
  width: 12px;
  height: 17px;
}

.doc {
  margin-left: 6px;
  padding-top: 2px;
}

.doc-title {
  display: flex;
  align-items: center;
  gap: 6px;
  color: #1d1f20;
  font-size: 8px;
  line-height: 12px;
}

.doc-title .icon:first-of-type {
  margin-left: 3px;
}

.menu {
  display: flex;
  gap: 5px;
}

.head-end {
  display: flex;
  align-items: center;
  gap: 12px;
  margin-left: auto;
}

.head-end .icon {
  width: 10px;
  height: 10px;
}

.head-end .user-m {
  width: 14px;
  height: 14px;
  margin-right: -3px;
}

.meet {
  gap: 5px;
}

.share {
  gap: 4px;
  height: 18px;
  padding: 0 5px 0 8px;
  border-radius: 9px;
  background: #c2e7ff;
  color: #123a5e;
}

.share .icon {
  width: 7px;
  height: 7px;
}

.share .caret {
  margin-left: 5px;
}

.photo {
  width: 14px;
  height: 14px;
  margin-left: -4px;
  border-radius: 50%;
  background: radial-gradient(circle at 50% 60%, #4a4d4b, #111 70%);
}

.sheets-body {
  display: flex;
  flex: 1;
}

.sheets-main {
  flex: 1;
  min-width: 0;
}

.toolbar {
  display: flex;
  align-items: center;
  height: 18px;
  margin: 2px 5px 2px 7px;
  border-radius: 9px;
  background: #f0f4f5;
}

.tool-search {
  display: flex;
  align-items: center;
  gap: 4px;
  width: 42px;
  height: 14px;
  margin: 0 2px 0 6px;
  padding-left: 3px;
  border-radius: 7px;
  background: #fff;
}

.tool-search input {
  width: 28px;
}

.tool {
  width: 14px;
  height: 14px;
}

.small-text {
  font-size: 6px;
}

.tool sub {
  font-size: 4px;
}

.serif {
  font-family: "Liberation Serif", serif;
  font-size: 9px;
}

.drop {
  gap: 6px;
  padding: 0 4px;
}

.tool-drop {
  gap: 3px;
  width: 18px;
}

.faded {
  width: 20px;
  opacity: 0.4;
}

.sep {
  width: 1px;
  height: 9px;
  margin: 0 2px;
  background: #d5dadb;
}

.sep-tight {
  margin: 0;
}

.sep-wide {
  margin: 0 3px;
}

.font-size {
  width: 14px;
  height: 11px;
  border: 1px solid #777c7f;
  border-radius: 2px;
  text-align: center;
}

.color-a {
  width: 10px;
  line-height: 7px;
  border-bottom: 2px solid #111;
}

.collapse {
  margin-left: auto;
  margin-right: 8px;
}

.formula {
  display: flex;
  align-items: center;
  height: 14px;
  padding-left: 6px;
  background: #fff;
}

.cell-name {
  width: 32px;
}

.fx {
  margin-left: 10px;
  font-style: italic;
}

.fx-input {
  flex: 1;
}

.grid-wrap {
  display: flex;
  background: #fff;
  font-family: Inter, "Open Sans", sans-serif;
}

.grid {
  flex: 1;
  width: 0;
  border-collapse: separate;
  border-spacing: 0;
  table-layout: fixed;
}

.c-head {
  width: 21px;
}

.c-a {
  width: 110px;
}

.c-b {
  width: 110px;
}

.c-c {
  width: 135px;
}

.c-d {
  width: 108px;
}

.c-n {
  width: 45px;
}

.c-m {
  width: 46px;
}

.grid th,
.grid td {
  padding: 0;
  border-right: 1px solid #e6e8e9;
  border-bottom: 1px solid #e6e8e9;
}

.grid th {
  color: #55585b;
  font-size: 5px;
  font-weight: 400;
  line-height: 7px;
}

.letters {
  height: 11px;
}

.letters th:first-child {
  border-right: 2px solid #b8bbbd;
}

.grid .picked {
  background: #d3e0f8;
  color: #1c2a44;
}

.titles {
  height: 13px;
}

.titles td {
  border-right-color: #dd6008;
  border-bottom: 2px solid #c6c9cb;
  background: #f2690b;
  color: #2b1406;
  font-weight: 700;
  text-align: center;
}

.row-2 {
  height: 161px;
}

.row-2 td {
  padding-left: 1px;
  vertical-align: bottom;
}

.row-2 a {
  color: #2d68b8;
  font-size: 6px;
  line-height: 7px;
  text-decoration: underline;
}

.row-3 {
  height: 19px;
}

.row-4 {
  height: 20px;
}

.row-5 {
  height: 133px;
}

.grid .row-5 th {
  padding-top: 34px;
}

.grid .selected {
  position: relative;
  border: 1px solid #4a7dc2;
  border-top: 0;
}

.selected::after {
  content: "";
  position: absolute;
  right: -3px;
  bottom: -2px;
  width: 4px;
  height: 4px;
  border-radius: 50%;
  background: #2456a6;
}

.grid .other-user {
  border: 1px solid #4d7a70;
  border-bottom: 0;
}

.v-scroll {
  width: 5px;
  padding-top: 23px;
  background: #f8fbfb;
}

.v-scroll span {
  display: block;
  height: 12px;
  background: #d7dadb;
}

.h-scroll {
  padding: 1px 0 0 21px;
}

.h-scroll span {
  display: block;
  width: 62%;
  height: 4px;
  border-radius: 2px;
  background: #d3d8d7;
}

.side {
  display: flex;
  flex-direction: column;
  align-items: center;
  gap: 17px;
  width: 25px;
  padding-top: 7px;
}

.side hr {
  width: 9px;
  margin: -1px 0 -2px;
  border: 0;
  border-top: 1px solid #e2e5e6;
}

.sheet-tabs {
  display: flex;
  align-items: center;
  gap: 10px;
  height: 17px;
  padding: 0 9px 0 23px;
}

.sheet-tab {
  gap: 5px;
  height: 16px;
  padding: 0 5px;
  background: #dfe9f9;
  color: #2358a5;
  font-weight: 700;
}

.side-toggle {
  margin-left: auto;
}

.cursor {
  position: absolute;
  width: 9px;
  height: 13px;
}

.cursor-dark {
  left: 326px;
  top: 203px;
}

.cursor-light {
  left: 508px;
  top: 123px;
}

/* Call controls */
.controls {
  display: grid;
  grid-template-columns: 1fr auto 1fr;
  padding: 6px 5px 5px;
}

.group {
  display: flex;
  gap: 5px;
}

.group:first-child {
  gap: 6px;
}

.group:last-child {
  justify-content: flex-end;
}

.control {
  position: relative;
  width: 32px;
  height: 32px;
  border-radius: 13px;
  background: #38383b;
  font-weight: 700;
}

.control .icon {
  width: 14px;
  height: 14px;
}

.wide {
  gap: 7px;
  width: auto;
  padding: 0 9px;
}

.control:disabled {
  background: #29292b;
  color: #6c6c70;
  font-weight: 400;
}

.count {
  width: 16px;
  height: 16px;
  border-radius: 50%;
  background: #4b4b4e;
  line-height: 16px;
}

.badge {
  position: absolute;
  top: -4px;
  right: -3px;
  width: 13px;
  height: 13px;
  border-radius: 50%;
  background: #ea4257;
  line-height: 13px;
}

.hangup {
  background: #460b14;
}

.hangup .icon {
  width: 16px;
  height: 16px;
}

/* Taskbars */
.taskbar {
  display: grid;
  grid-template-columns: 1fr auto 1fr;
  height: 27px;
  background: #101011;
  color: #e4e4e4;
  font-size: 8px;
  font-weight: 400;
}

.start {
  display: flex;
  align-items: center;
  gap: 13px;
  padding-left: 10px;
  font-size: 9px;
}

.apps {
  display: flex;
  gap: 1px;
}

.app {
  width: 32px;
  border-bottom: 2px solid transparent;
}

.app .icon {
  width: 16px;
  height: 16px;
}

.app.open {
  border-bottom-color: #6faed6;
}

.app.active {
  background: #343437;
}

.tray {
  display: flex;
  align-items: center;
  justify-content: flex-end;
  gap: 5px;
  padding-right: 14px;
}

.tray .icon {
  width: 11px;
  height: 11px;
}

.tray .keys {
  width: 16px;
  margin-right: 3px;
}

.tray time {
  margin-right: 4px;
  text-align: center;
}

.notif {
  position: relative;
  width: 15px;
  height: 15px;
}

.notif svg {
  width: 15px;
  height: 15px;
  fill: none;
}

.notif b {
  position: absolute;
  right: 3px;
  bottom: -1px;
  font-size: 6px;
  line-height: 10px;
}

.inner-taskbar {
  display: flex;
  align-items: center;
  height: 23px;
  padding-left: 8px;
  background: #1b1b1d;
}

.inner-taskbar .find {
  width: 14px;
  height: 14px;
  margin-left: 15px;
}

.inner-apps {
  display: flex;
  align-items: center;
  align-self: stretch;
  gap: 3px;
  margin-left: auto;
}

.inner-apps .app {
  width: 28px;
  align-self: stretch;
}

.inner-apps .app.open {
  border-bottom-color: #b9b9bb;
}

.inner-apps .app.active {
  background: #2b2b2e;
}

.speaker {
  display: flex;
  align-items: center;
  align-self: stretch;
  padding-left: 6px;
  background: linear-gradient(#b9b9bb, #b9b9bb) 0 100% / 23px 2px no-repeat;
  font-size: 10px;
  font-weight: 500;
}

.arc {
  width: 7px;
  height: 14px;
  fill: none;
}

.inner-taskbar .tray {
  width: 416px;
  padding-right: 10px;
  gap: 4px;
}

.inner-taskbar time {
  margin: 0 5px 0 4px;
  font-size: 7px;
}
```
